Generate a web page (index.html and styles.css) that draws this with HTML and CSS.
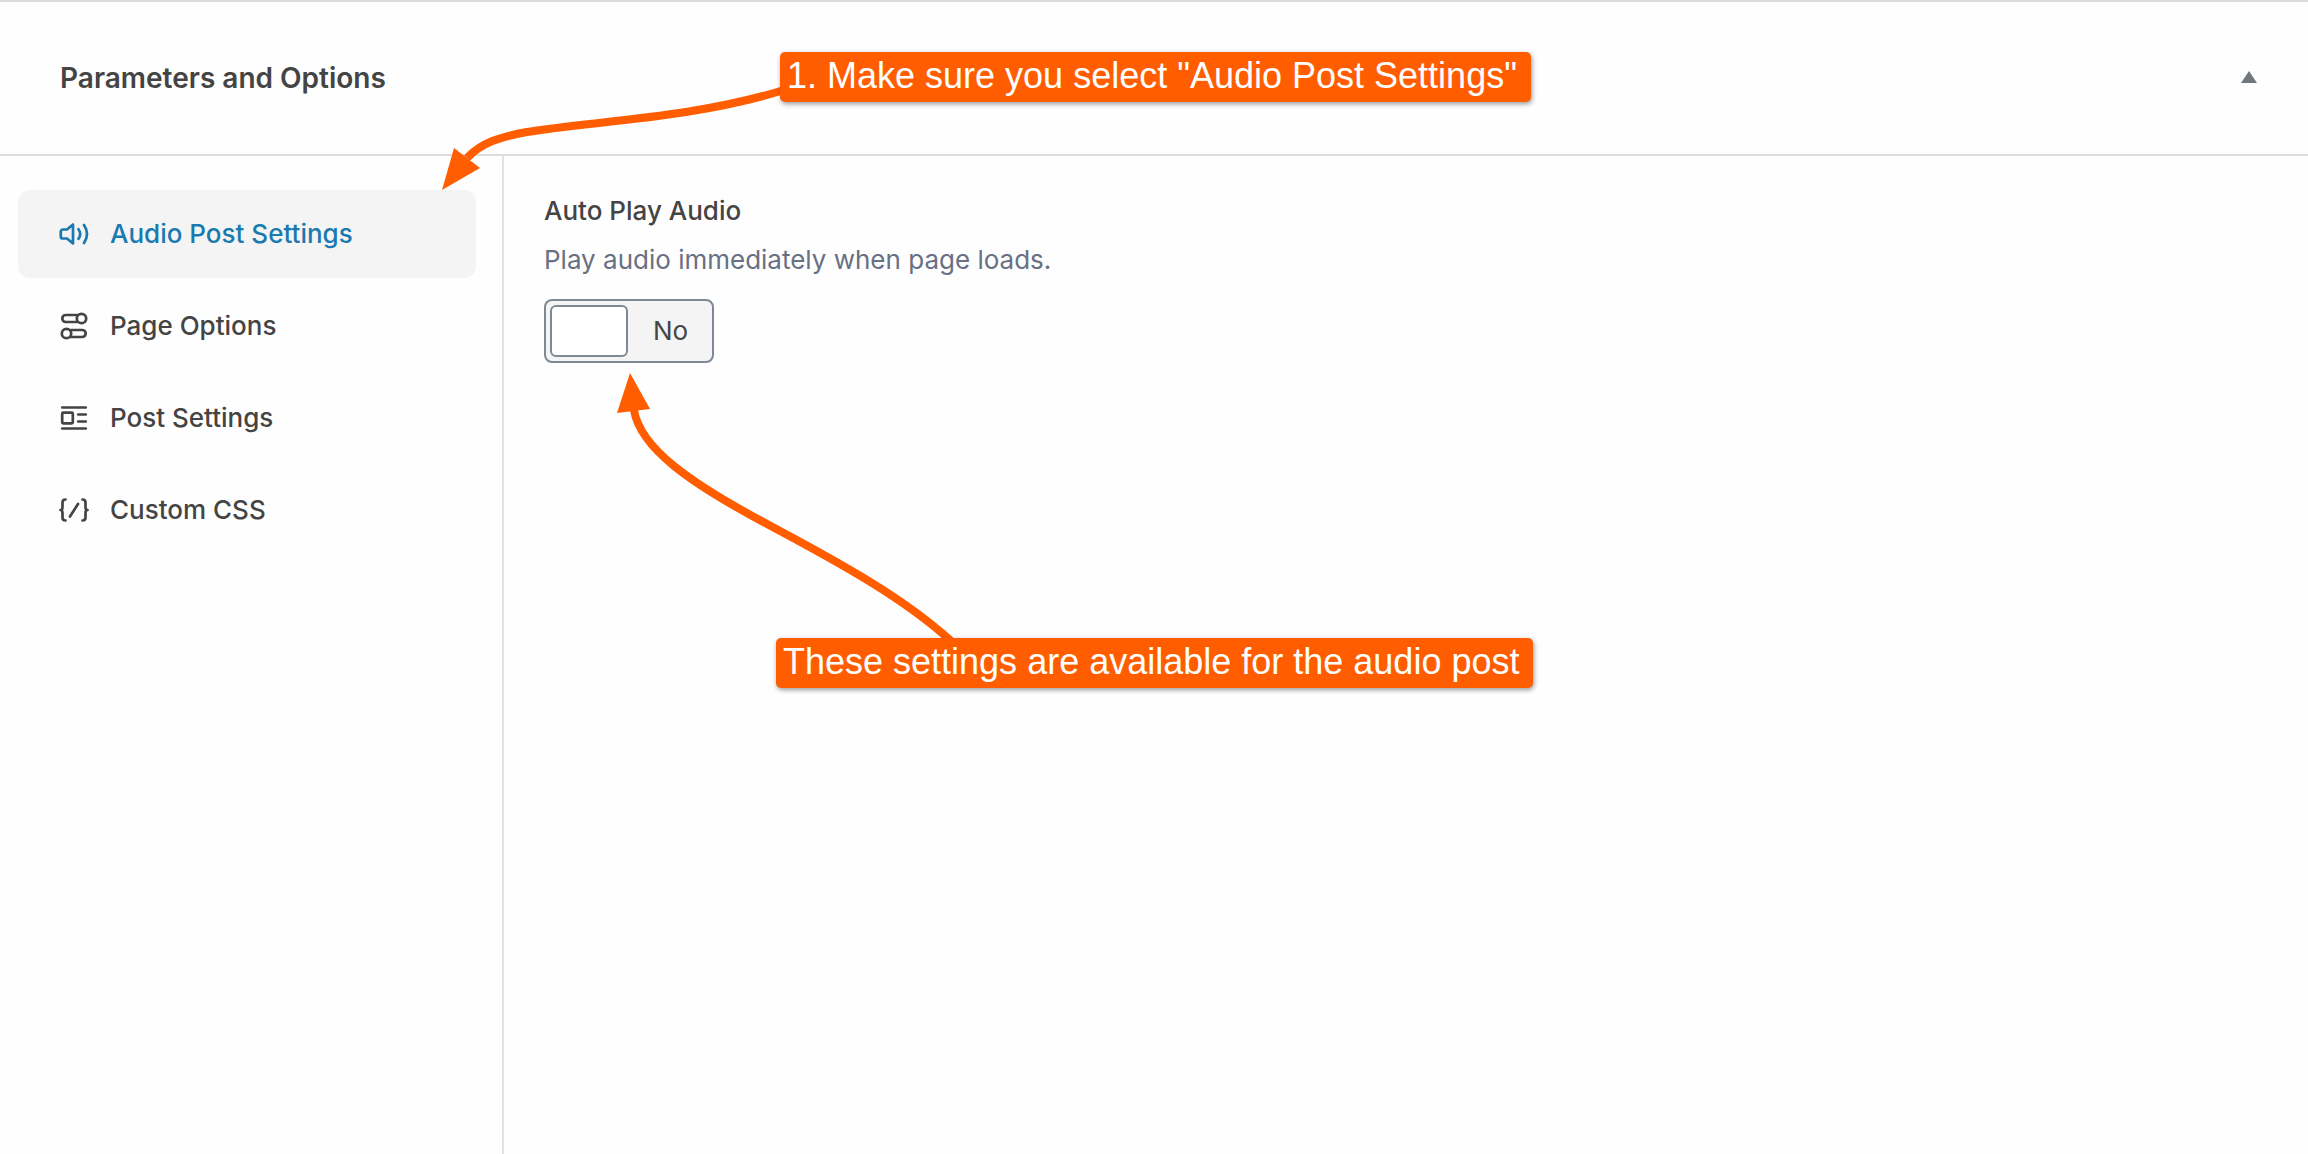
FILE: index.html
```html
<!DOCTYPE html>
<html lang="en">
<head>
<meta charset="utf-8">
<meta name="viewport" content="width=device-width, initial-scale=1">
<title>Parameters and Options</title>
<link rel="stylesheet" href="styles.css">
</head>
<body>
<section class="panel">
  <header class="panel-header">
    <h2 class="panel-title">Parameters and Options</h2>
    <button class="collapse" type="button" aria-label="Collapse panel" aria-expanded="true">
      <svg width="16" height="12" viewBox="0 0 16 12" aria-hidden="true"><path d="M8 0L16 12H0z" fill="currentColor"/></svg>
    </button>
  </header>
  <div class="panel-body">
    <nav class="tabs" aria-label="Settings sections">
      <a class="tab tab-active" href="#audio" aria-current="true">
        <svg class="icon" viewBox="0 0 32 32" aria-hidden="true"><path d="M15 6.500v19l-6-5H4.800a2 2 0 0 1-2-2v-5a2 2 0 0 1 2-2H9zM20.500 11.200q3.500 4.800 0 9.600M26 7q6 9 0 18"/></svg>
        <span>Audio Post Settings</span>
      </a>
      <a class="tab" href="#page">
        <svg class="icon" viewBox="0 0 32 32" aria-hidden="true"><path d="M19 12H7.800a3.500 3.500 0 0 1 0-7H19M13 20h11.200a3.500 3.500 0 0 1 0 7H13"/><circle cx="23.500" cy="8.500" r="4.700"/><circle cx="8.500" cy="23.500" r="4.700"/></svg>
        <span>Page Options</span>
      </a>
      <a class="tab" href="#post">
        <svg class="icon" viewBox="0 0 32 32" aria-hidden="true"><path d="M4.200 5.500h23.600M4.200 26.500h23.600M20.200 12.500h7.600M20.200 19.500h7.600"/><rect x="4.200" y="10.700" width="10.600" height="10.600" rx="1"/></svg>
        <span>Post Settings</span>
      </a>
      <a class="tab" href="#css">
        <svg class="icon" viewBox="0 0 32 32" aria-hidden="true"><path d="M7.500 5.500Q4.500 5.500 4.500 8.500V13Q4.500 16 2.500 16Q4.500 16 4.500 19V23.500Q4.500 26.500 7.500 26.500M24.500 5.500Q27.500 5.500 27.500 8.500V13Q27.500 16 29.500 16Q27.500 16 27.500 19V23.500Q27.500 26.500 24.500 26.500M20 10L12 22.500"/></svg>
        <span>Custom CSS</span>
      </a>
    </nav>
    <main class="content">
      <label class="field-label" for="autoplay">Auto Play Audio</label>
      <p class="field-help" id="autoplay-help">Play audio immediately when page loads.</p>
      <div class="toggle">
        <input class="toggle-knob" type="checkbox" id="autoplay" aria-describedby="autoplay-help">
        <span class="toggle-text">No</span>
      </div>
    </main>
  </div>
  <svg class="arrows" width="1000" height="660" viewBox="0 0 1000 660" aria-hidden="true">
    <path class="arrow-line" d="M467 158C481 143 499 137 527 132C592 121 690 119 784 90"/>
    <path class="arrow-head" d="M442 190L454 148L480 168z"/>
    <path class="arrow-line" d="M634 410C640 448 690 483 767 524S905 599 951 641"/>
    <path class="arrow-head" d="M630 373L617 413L650 409z"/>
  </svg>
  <p class="note note-select">1. Make sure you select "Audio Post Settings"</p>
  <p class="note note-settings">These settings are available for the audio post</p>
</section>
</body>
</html>
```
FILE: styles.css
```css
* {
  box-sizing: border-box;
}

body {
  margin: 0;
  background: #fefefe;
  color: #444;
  font-family: Inter, "Liberation Sans", sans-serif;
  font-size: 26px;
  line-height: 32px;
}

.panel {
  position: relative;
  display: flex;
  flex-direction: column;
  min-height: 100vh;
  border-top: 2px solid #dcdcdc;
}

.panel-header {
  display: flex;
  align-items: center;
  justify-content: space-between;
  height: 154px;
  padding: 0 43px 0 60px;
  border-bottom: 2px solid #dcdcdc;
}

.panel-title {
  margin: 0;
  font-size: 28px;
  font-weight: 600;
}

.collapse {
  display: flex;
  align-items: center;
  justify-content: center;
  width: 32px;
  height: 32px;
  padding: 0 0 2px;
  border: 0;
  background: none;
  color: #72777c;
}

.panel-body {
  display: flex;
  flex: 1;
}

.tabs {
  display: flex;
  flex-direction: column;
  flex: none;
  gap: 4px;
  width: 504px;
  padding: 34px 26px 34px 18px;
  border-right: 2px solid #e2e2e2;
}

.tab {
  display: flex;
  align-items: center;
  gap: 20px;
  height: 88px;
  padding: 0 40px;
  border-radius: 12px;
  color: #444;
  font-weight: 500;
  text-decoration: none;
}

.tab-active {
  background: #f4f4f4;
  color: #1a7ab0;
}

.icon {
  width: 32px;
  height: 32px;
  fill: none;
  stroke: currentColor;
  stroke-width: 2.7;
  stroke-linecap: round;
  stroke-linejoin: round;
}

.content {
  flex: 1;
  padding: 39px 40px;
}

.field-label {
  display: block;
  margin-bottom: 17px;
  font-weight: 500;
}

.field-help {
  margin: 0 0 23px;
  color: #687083;
}

.toggle {
  display: inline-flex;
  align-items: center;
  height: 64px;
  padding: 0 24px 0 4px;
  gap: 25px;
  border: 2px solid #7e8993;
  border-radius: 8px;
  background: #f4f4f4;
}

.toggle-knob {
  appearance: none;
  width: 78px;
  height: 52px;
  margin: 0;
  border: 2px solid #7e8993;
  border-radius: 6px;
  background: #fff;
}

.arrows {
  position: absolute;
  top: -2px;
  left: 0;
  pointer-events: none;
}

.arrow-line {
  fill: none;
  stroke: #ff5d00;
  stroke-width: 8;
}

.arrow-head {
  fill: #ff5d00;
}

.note {
  position: absolute;
  margin: 0;
  padding: 0 14px 2px 7px;
  border-radius: 5px;
  background: #ff5d00;
  box-shadow: 1px 2px 5px rgba(0, 0, 0, 0.4);
  color: #fff;
  font-family: "Liberation Sans", Arial, sans-serif;
  font-size: 36px;
  line-height: 48px;
  white-space: nowrap;
}

.note-select {
  top: 50px;
  left: 780px;
}

.note-settings {
  top: 636px;
  left: 776px;
}
```
